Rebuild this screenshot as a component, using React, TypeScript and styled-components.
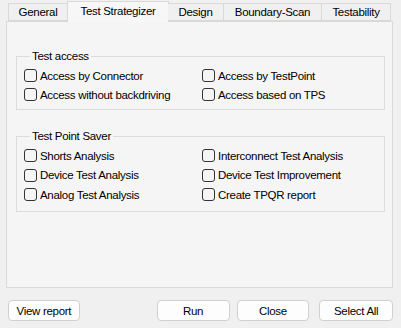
import React from "react";
import styled, { createGlobalStyle } from "styled-components";

const Global = createGlobalStyle`
  html, body { margin: 0; padding: 0; background: #f0f0f0; }
  * { box-sizing: border-box; }
`;

const FONT = `"Liberation Sans", Arial, sans-serif`;

const Window = styled.div`
  width: 401px;
  height: 328px;
  background: #f0f0f0;
  font-family: ${FONT};
  font-size: 11.5px;
  letter-spacing: -0.3px;
  color: #000;
  display: flex;
  flex-direction: column;
  padding-top: 1px;
`;

const TabBar = styled.div`
  display: flex;
  align-items: flex-end;
  height: 20px;
  padding-left: 8px;
  position: relative;
  z-index: 1;
`;

const Tab = styled.div<{ $w: number; $active?: boolean }>`
  width: ${(p) => p.$w}px;
  height: ${(p) => (p.$active ? 21 : 18)}px;
  margin-bottom: ${(p) => (p.$active ? -1 : 0)}px;
  margin-left: ${(p) => (p.$active ? -1 : 0)}px;
  margin-right: ${(p) => (p.$active ? -1 : 0)}px;
  border: 1px solid #d9d9d9;
  border-bottom: ${(p) => (p.$active ? "none" : "1px solid #d9d9d9")};
  border-left: ${(p) => (p.$active ? "1px solid #d9d9d9" : "none")};
  &:first-child { border-left: 1px solid #d9d9d9; }
  background: ${(p) => (p.$active ? "#f7f7f7" : "#f0f0f0")};
  display: flex;
  align-items: center;
  justify-content: center;
  padding-bottom: ${(p) => (p.$active ? 3 : 1)}px;
  white-space: nowrap;
`;

const Panel = styled.div`
  margin: 0 8px 0 6px;
  height: 267px;
  border: 1px solid #d9d9d9;
  background: #f5f5f5;
  display: flex;
  flex-direction: column;
  padding-top: 27px;
`;

const Group = styled.fieldset<{ $mt?: number; $pb?: number; $gap?: number }>`
  margin: ${(p) => p.$mt ?? 0}px 7px 0 9px;
  padding: 6px 0 ${(p) => p.$pb ?? 8}px 7px;
  border: 1px solid #dcdcdc;
  min-inline-size: auto;
  display: grid;
  grid-template-columns: 178px 1fr;
  row-gap: ${(p) => p.$gap ?? 6}px;
`;

const Legend = styled.legend`
  padding: 0 2px;
  margin-left: 6px;
  line-height: 14px;
  height: 14px;
`;

const CheckRow = styled.label`
  display: flex;
  align-items: center;
  gap: 3px;
  height: 13px;
  white-space: nowrap;
`;

const Box = styled.span`
  width: 13px;
  height: 13px;
  border: 1px solid #333;
  border-radius: 3px;
  background: #f5f5f5;
  flex: none;
`;

const Footer = styled.div`
  display: flex;
  margin-top: 12px;
  padding: 0 8px;
`;

const Button = styled.button<{ $w: number; $ml?: number }>`
  width: ${(p) => p.$w}px;
  height: 21px;
  margin-left: ${(p) => p.$ml ?? 0}px;
  border: 1px solid #d0d0d0;
  border-radius: 4px;
  background: #fdfdfd;
  font-family: ${FONT};
  font-size: 11.5px;
  letter-spacing: -0.3px;
  color: #000;
  padding: 0;
`;

const Check = ({ children }: { children: React.ReactNode }) => (
  <CheckRow>
    <Box />
    {children}
  </CheckRow>
);

export default function App() {
  return (
    <>
      <Global />
      <Window>
        <TabBar>
          <Tab $w={60}>General</Tab>
          <Tab $w={102} $active>Test Strategizer</Tab>
          <Tab $w={56}>Design</Tab>
          <Tab $w={98}>Boundary-Scan</Tab>
          <Tab $w={69}>Testability</Tab>
        </TabBar>
        <Panel>
          <Group>
            <Legend>Test access</Legend>
            <Check>Access by Connector</Check>
            <Check>Access by TestPoint</Check>
            <Check>Access without backdriving</Check>
            <Check>Access based on TPS</Check>
          </Group>
          <Group $mt={19} $pb={10} $gap={6.5}>
            <Legend>Test Point Saver</Legend>
            <Check>Shorts Analysis</Check>
            <Check>Interconnect Test Analysis</Check>
            <Check>Device Test Analysis</Check>
            <Check>Device Test Improvement</Check>
            <Check>Analog Test Analysis</Check>
            <Check>Create TPQR report</Check>
          </Group>
        </Panel>
        <Footer>
          <Button $w={72}>View report</Button>
          <Button $w={73} $ml={77}>Run</Button>
          <Button $w={73} $ml={7}>Close</Button>
          <Button $w={74} $ml={10}>Select All</Button>
        </Footer>
      </Window>
    </>
  );
}
